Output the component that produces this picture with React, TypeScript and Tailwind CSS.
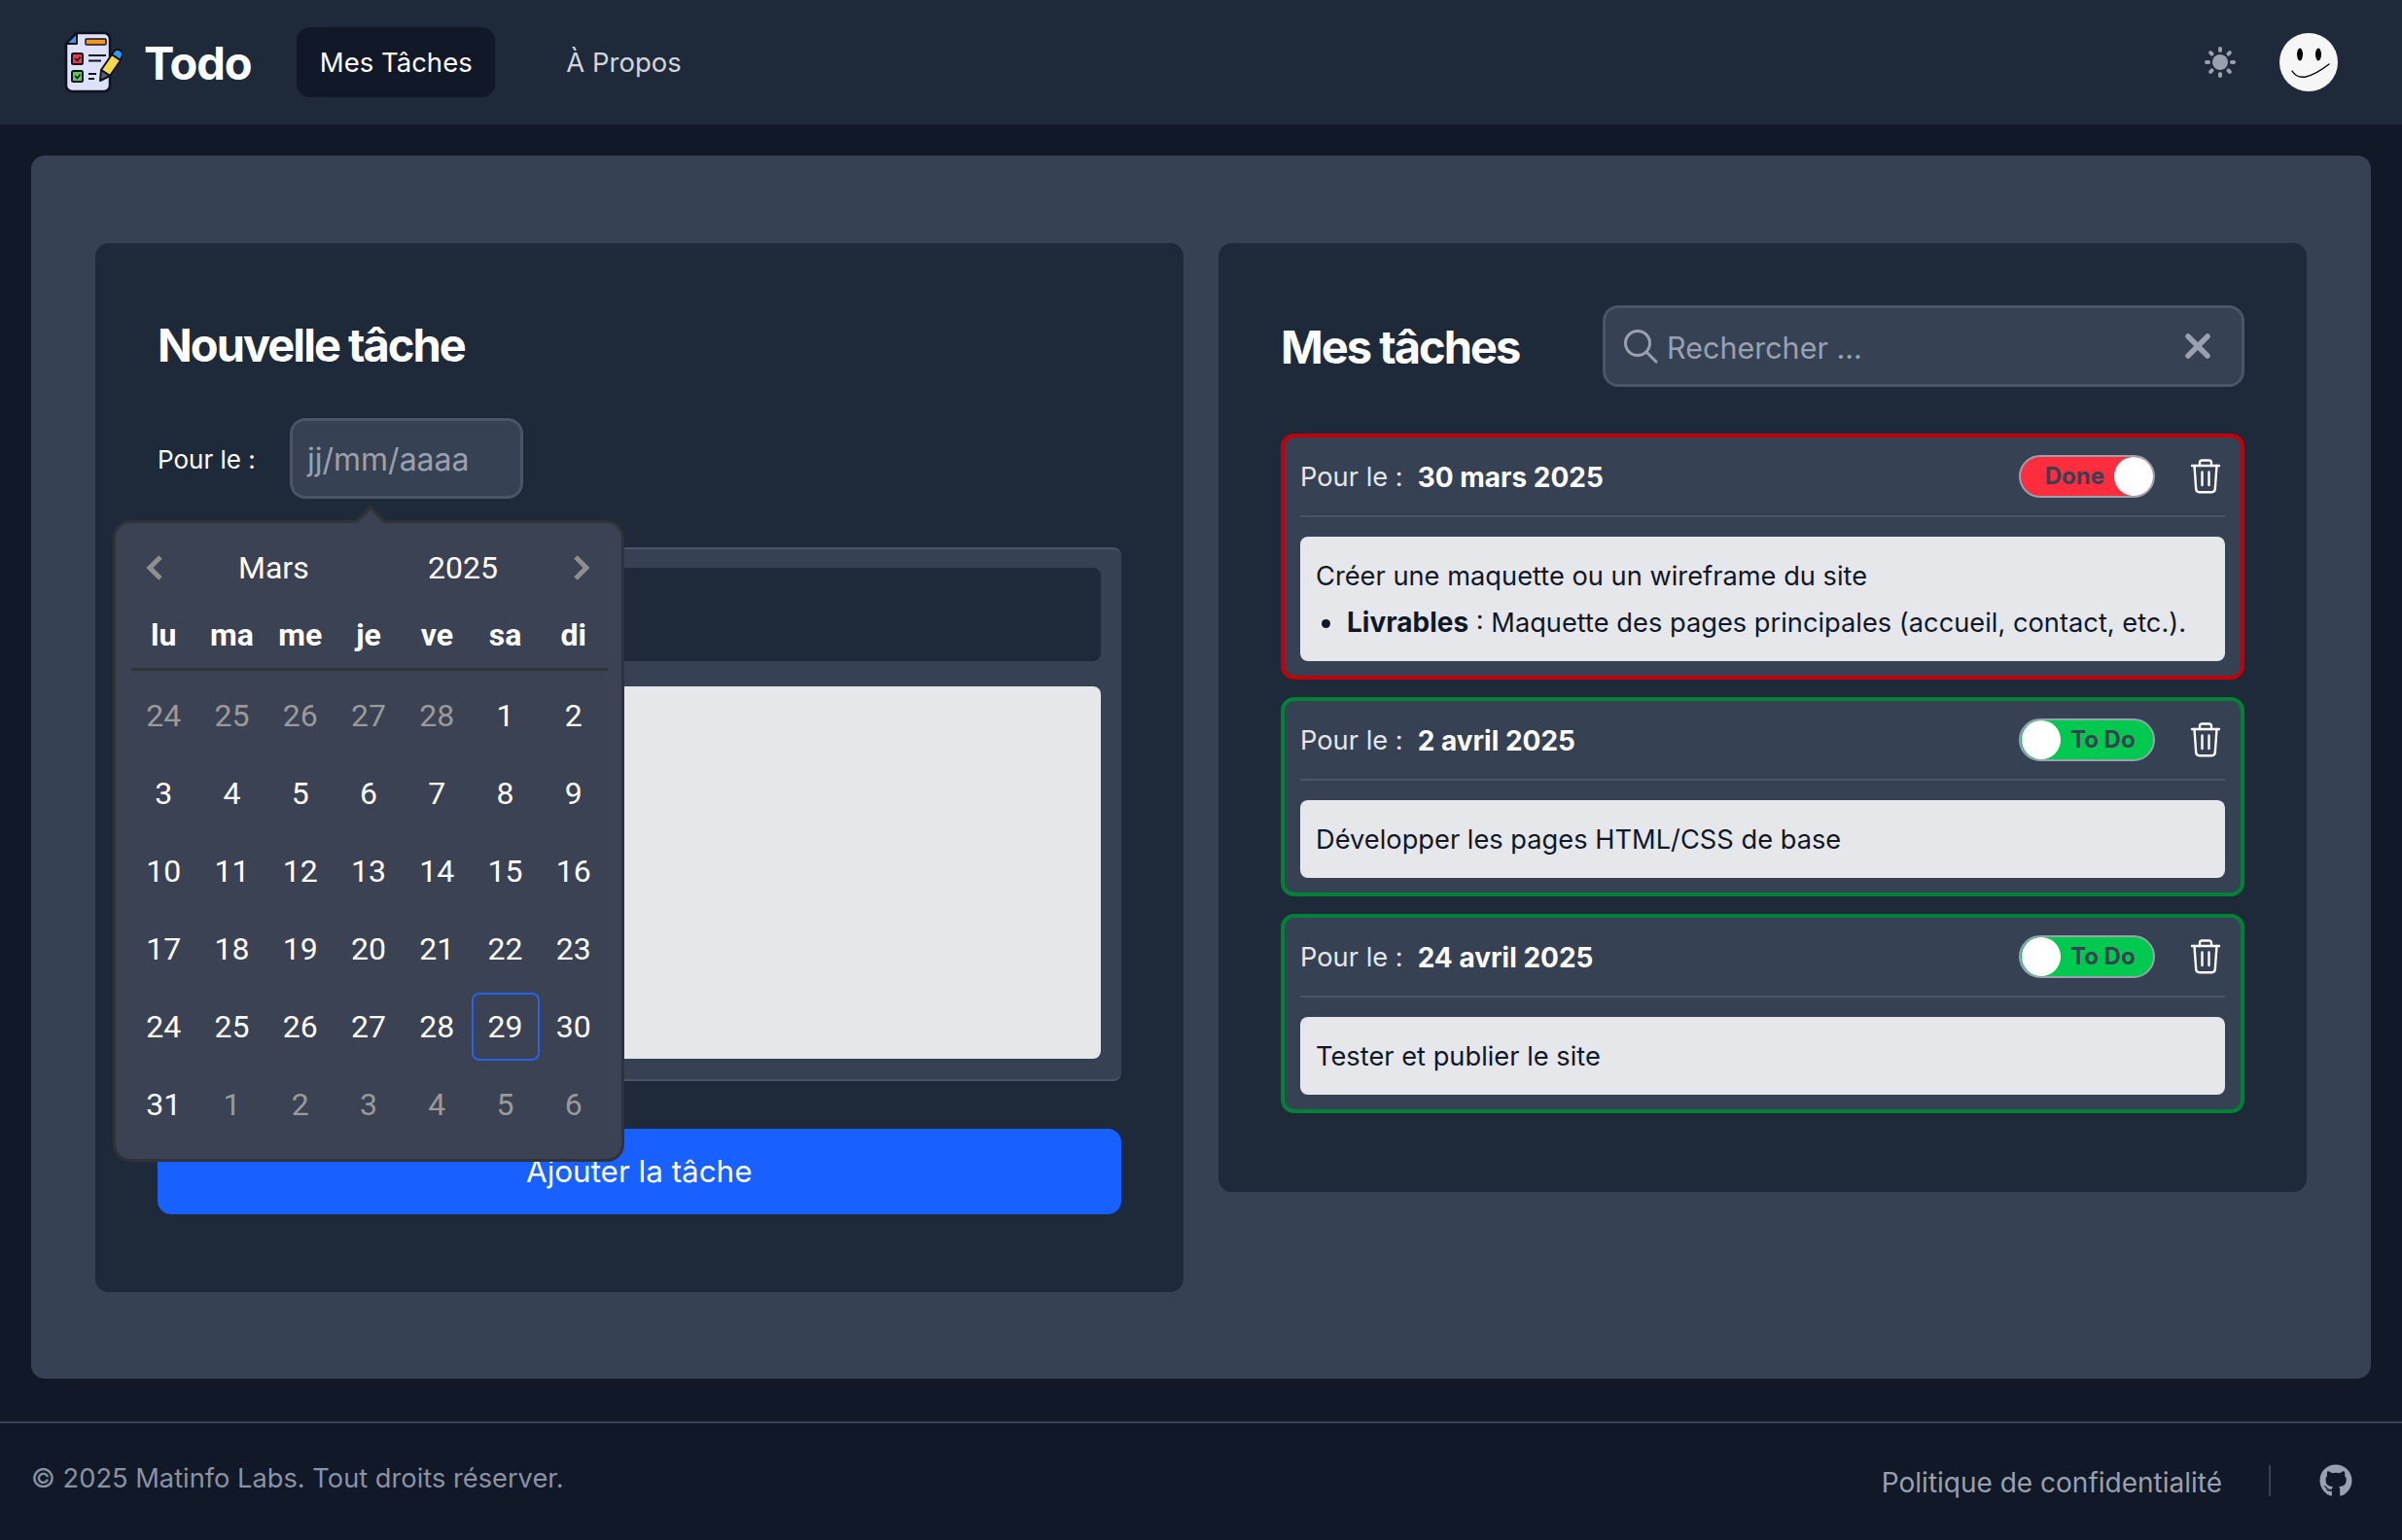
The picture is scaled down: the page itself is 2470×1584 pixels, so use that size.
import { FaGithub } from 'react-icons/fa';

const days = [
  [24, 25, 26, 27, 28, 1, 2],
  [3, 4, 5, 6, 7, 8, 9],
  [10, 11, 12, 13, 14, 15, 16],
  [17, 18, 19, 20, 21, 22, 23],
  [24, 25, 26, 27, 28, 29, 30],
  [31, 1, 2, 3, 4, 5, 6],
];

function Logo() {
  return (
    <svg width="60" height="64" viewBox="0 0 60 64" className="shrink-0">
      <path d="M13 2H41a6 6 0 0 1 6 6V56a6 6 0 0 1-6 6H8a6 6 0 0 1-6-6V13Z" fill="#dde1fb" stroke="#11131c" strokeWidth="2.5" strokeLinejoin="round" />
      <path d="M13 2V13H2Z" fill="#2f9bf0" stroke="#11131c" strokeWidth="2" strokeLinejoin="round" />
      <rect x="22" y="8" width="21" height="6" rx="1" fill="#f7931e" stroke="#11131c" strokeWidth="1.5" />
      <rect x="8" y="23" width="11" height="11" rx="1.5" fill="#f0384a" stroke="#11131c" strokeWidth="2" />
      <path d="M11 28l2.5 2.5 3-4" fill="none" stroke="#11131c" strokeWidth="1.5" />
      <path d="M25 25H43M25 30.5H38" stroke="#11131c" strokeWidth="2" />
      <rect x="8" y="41" width="11" height="11" rx="1.5" fill="#5ec95a" stroke="#11131c" strokeWidth="2" />
      <path d="M11 46l2.5 2.5 3-4" fill="none" stroke="#11131c" strokeWidth="1.5" />
      <path d="M25 44H33M25 49H31" stroke="#11131c" strokeWidth="2" />
      <path d="M49 24l9 6-11 16-9-6Z" fill="#f7d84a" stroke="#11131c" strokeWidth="2" strokeLinejoin="round" />
      <path d="M38 40l9 6-10 5Z" fill="#5a6070" stroke="#11131c" strokeWidth="2" strokeLinejoin="round" />
      <path d="M49 24l2-3a5 5 0 0 1 8 6l-1 3Z" fill="#2f9bf0" stroke="#11131c" strokeWidth="2" strokeLinejoin="round" />
    </svg>
  );
}

function Sun() {
  return (
    <svg width="32" height="32" viewBox="0 0 32 32" fill="#99a1af">
      <circle cx="16" cy="16" r="8" />
      <rect x="14" y="0" width="4" height="6" rx="2" />
      <rect x="14" y="26" width="4" height="6" rx="2" />
      <rect x="0" y="14" width="6" height="4" rx="2" />
      <rect x="26" y="14" width="6" height="4" rx="2" />
      <rect x="14" y="0" width="4" height="6" rx="2" transform="rotate(45 16 16)" />
      <rect x="14" y="0" width="4" height="6" rx="2" transform="rotate(135 16 16)" />
      <rect x="14" y="0" width="4" height="6" rx="2" transform="rotate(225 16 16)" />
      <rect x="14" y="0" width="4" height="6" rx="2" transform="rotate(315 16 16)" />
    </svg>
  );
}

function Smiley() {
  return (
    <svg width="60" height="60" viewBox="0 0 60 60">
      <circle cx="30" cy="30" r="30" fill="#f6f6f6" />
      <ellipse cx="21" cy="22" rx="3" ry="6.5" fill="#000" />
      <ellipse cx="40" cy="22" rx="3" ry="6.5" fill="#000" />
      <path d="M13 39c3 5 8 7 14 6 8-2 15-6 24-13" fill="none" stroke="#000" strokeWidth="1.4" strokeLinecap="round" />
    </svg>
  );
}

function Trash() {
  return (
    <svg width="32" height="36" viewBox="0 0 32 36" fill="none" stroke="#fff" strokeWidth="2.4" strokeLinecap="round" strokeLinejoin="round" className="shrink-0">
      <path d="M2 7H30" />
      <path d="M10 7V4a2.5 2.5 0 0 1 2.5-2.5h7A2.5 2.5 0 0 1 22 4v3" />
      <path d="M4.5 7l1.7 24a3.5 3.5 0 0 0 3.5 3.2h12.6a3.5 3.5 0 0 0 3.5-3.2L27.5 7" />
      <path d="M12.5 13.5V27M19.5 13.5V27" />
    </svg>
  );
}

function Toggle({ done }: { done: boolean }) {
  return (
    <div className={`flex h-[44px] w-[140px] items-center rounded-full border-2 border-[#99a1af] text-[24px] font-bold text-[#364153] ${done ? 'justify-end bg-[#ff2d3d] pl-[24px]' : 'bg-[#00c950] pl-[1px]'}`}>
      {done ? (
        <>
          <span className="mr-[10px]">Done</span>
          <span className="h-[40px] w-[40px] rounded-full bg-white" />
        </>
      ) : (
        <>
          <span className="h-[40px] w-[40px] rounded-full bg-white" />
          <span className="ml-[10px]">To Do</span>
        </>
      )}
    </div>
  );
}

function TaskCard({ date, done, children }: { date: string; done?: boolean; children: React.ReactNode }) {
  return (
    <div className={`rounded-[14px] border-4 bg-[#364153] px-[16px] pt-[18px] pb-[15px] ${done ? 'border-[#c10007]' : 'border-[#008236]'}`}>
      <div className="flex h-[64px] items-start justify-between border-b-2 border-[#4a5565] pb-[18px]">
        <div className="flex h-[44px] items-center pt-[2px] text-[27.25px] text-gray-200">
          Pour le :<span className="ml-[15px] text-[28px] font-bold text-white">{date}</span>
        </div>
        <div className="flex items-center">
          <Toggle done={!!done} />
          <div className="mr-[4px] ml-[36px]">
            <Trash />
          </div>
        </div>
      </div>
      <div className="mt-[20px] rounded-[8px] bg-gray-200 px-[16px] pt-[17px] pb-[15px] text-[27.25px] leading-[48px] text-[#101828]">{children}</div>
    </div>
  );
}

function Calendar() {
  return (
    <div className="absolute top-[535px] left-[116px] z-10 h-[660px] w-[526px] rounded-[18px] border-[3px] border-[#2f3237] bg-[#3a4253] font-['Roboto',sans-serif] text-white">
      {/* little arrow above the input */}
      <div className="absolute -top-[13px] left-[250px] h-[24px] w-[24px] rotate-45 border-t-[3px] border-l-[3px] border-[#2f3237] bg-[#3a4253]" />
      <div className="relative flex h-[92px] items-center pr-[32px] pl-[31px] text-[32px]">
        <svg width="18" height="26" viewBox="0 0 18 26" fill="none" stroke="#8f8f8f" strokeWidth="5">
          <path d="M15 2L4 13l11 11" />
        </svg>
        <span className="ml-[77px] w-[72px] text-center">Mars</span>
        <span className="ml-[123px] w-[72px] text-center">2025</span>
        <svg className="ml-auto" width="18" height="26" viewBox="0 0 18 26" fill="none" stroke="#8f8f8f" strokeWidth="5">
          <path d="M3 2l11 11L3 24" />
        </svg>
      </div>
      <div className="relative mx-[14px] h-[60px]">
        <div className="grid grid-cols-7 pt-[1px] text-center text-[32px] font-bold">
          {['lu', 'ma', 'me', 'je', 've', 'sa', 'di'].map((d) => (
            <div key={d} className="leading-[44px]">
              {d}
            </div>
          ))}
        </div>
        <div className="absolute right-0 bottom-0 left-[2px] h-[3px] bg-[#2f3237]" />
      </div>
      <div className="mx-[14px] mt-[6px] grid grid-cols-7 text-center text-[32px]">
        {days.map((row, r) =>
          row.map((d, c) => {
            const muted = (r === 0 && c < 5) || (r === 5 && c > 0);
            const selected = r === 4 && c === 5;
            return (
              <div key={`${r}-${c}`} className="flex h-[80px] items-center justify-center">
                <span className={`flex h-[70px] w-[70px] items-center justify-center rounded-[8px] border-2 ${selected ? 'border-[#2563eb]' : 'border-transparent'} ${muted ? 'text-[#9a9a9a]' : ''}`}>
                  {d}
                </span>
              </div>
            );
          }),
        )}
      </div>
    </div>
  );
}

export default function App() {
  return (
    <div className="relative flex h-[1584px] flex-col overflow-hidden bg-[#111827] font-['Inter',sans-serif] text-white">
      {/* Navbar */}
      <header className="flex h-[128px] shrink-0 items-center bg-[#1e2939] pr-[66px] pl-[66px]">
        <Logo />
        <span className="ml-[22px] pt-[2px] text-[47px] font-bold tracking-tight">Todo</span>
        <nav className="ml-[47px] flex items-center text-[27.5px]">
          <a className="flex h-[72px] w-[204px] items-center justify-center rounded-[14px] bg-[#111827] pt-[2px] text-white">Mes Tâches</a>
          <a className="ml-[73px] pt-[2px] text-gray-300">À Propos</a>
        </nav>
        <div className="ml-auto flex items-center">
          <Sun />
          <div className="ml-[45px]">
            <Smiley />
          </div>
        </div>
      </header>

      {/* Main */}
      <main className="shrink-0 p-[32px]">
        <div className="h-[1258px] rounded-[14px] bg-[#364153] px-[66px] pt-[90px]">
          <div className="grid grid-cols-[1118.5px_1fr] items-start gap-[36.5px]">
            {/* New task */}
            <section className="rounded-[14px] bg-[#1e2939] px-[64px] pt-[73px] pb-[80px]">
              <h2 className="h-[64px] text-[47px] leading-[64px] font-bold tracking-[-0.042em]">Nouvelle tâche</h2>
              <div className="mt-[43px] flex items-center">
                <label className="w-[136px] pt-[2px] text-[26px]">Pour le :</label>
                <div className="flex h-[83px] w-[240px] items-center rounded-[16px] border-[3px] border-[#4a5565] bg-[#364153] pt-[2px] pl-[15px] text-[32px] text-[#99a1af]">jj/mm/aaaa</div>
              </div>
              <div className="mt-[50px] h-[549px] rounded-[8px] border-t-2 border-b-2 border-[#4a5565] bg-[#364153] px-[21px] pt-[19px]">
                <div className="h-[96px] rounded-[8px] bg-[#1e2939]" />
                <div className="mt-[26px] h-[383px] rounded-[8px] bg-gray-200" />
              </div>
              <button className="mt-[49px] h-[88px] w-full rounded-[14px] bg-[#1860ff] pt-[2px] text-[31.4px] text-white">Ajouter la tâche</button>
            </section>

            {/* Tasks */}
            <section className="rounded-[14px] bg-[#1e2939] px-[64px] pt-[64px] pb-[81px]">
              <div className="flex h-[84px] items-center justify-between">
                <h2 className="pt-[3px] text-[47px] font-bold tracking-[-0.042em]">Mes tâches</h2>
                <div className="flex h-[84px] w-[660px] items-center rounded-[16px] border-[3px] border-[#4a5565] bg-[#364153] px-[18px] text-[30.5px] text-[#99a1af]">
                  <svg width="36" height="36" viewBox="0 0 36 36" fill="none" stroke="#99a1af" strokeWidth="3" strokeLinecap="round">
                    <circle cx="15" cy="15" r="12.5" />
                    <path d="M24 24l10 10" />
                  </svg>
                  <span className="ml-[9px] pt-[3px]">Rechercher ...</span>
                  <svg className="ml-auto mr-[14px]" width="26" height="26" viewBox="0 0 26 26" fill="none" stroke="#99a1af" strokeWidth="5.5" strokeLinecap="round">
                    <path d="M3 3l20 20M23 3L3 23" />
                  </svg>
                </div>
              </div>
              <div className="mt-[48px] flex flex-col gap-[18px]">
                <TaskCard date="30 mars 2025" done>
                  <p>Créer une maquette ou un wireframe du site</p>
                  <ul className="flex items-center">
                    <li className="ml-[6px] h-[9px] w-[9px] rounded-full bg-[#101828]" />
                    <li className="ml-[17px]">
                      <strong className="text-[28px] leading-none">Livrables</strong> : Maquette des pages principales (accueil, contact, etc.).
                    </li>
                  </ul>
                </TaskCard>
                <TaskCard date="2 avril 2025">Développer les pages HTML/CSS de base</TaskCard>
                <TaskCard date="24 avril 2025">Tester et publier le site</TaskCard>
              </div>
            </section>
          </div>
        </div>
      </main>

      {/* Footer */}
      <footer className="mt-[12px] flex h-[122px] shrink-0 items-center justify-between border-t-2 border-[#364153] pr-[33px] pb-[6px] pl-[32px] text-[#99a1af]">
        <span className="text-[27.25px] text-[#8a92a3]">© 2025 Matinfo Labs. Tout droits réserver.</span>
        <div className="flex items-center pt-[4px] pr-[18px]">
          <a className="pt-[3px] text-[28px]">Politique de confidentialité</a>
          <span className="mr-[50px] ml-[48px] h-[32px] w-[2px] bg-[#364153]" />
          <FaGithub className="h-[34px] w-[34px]" />
        </div>
      </footer>

      <Calendar />
    </div>
  );
}
